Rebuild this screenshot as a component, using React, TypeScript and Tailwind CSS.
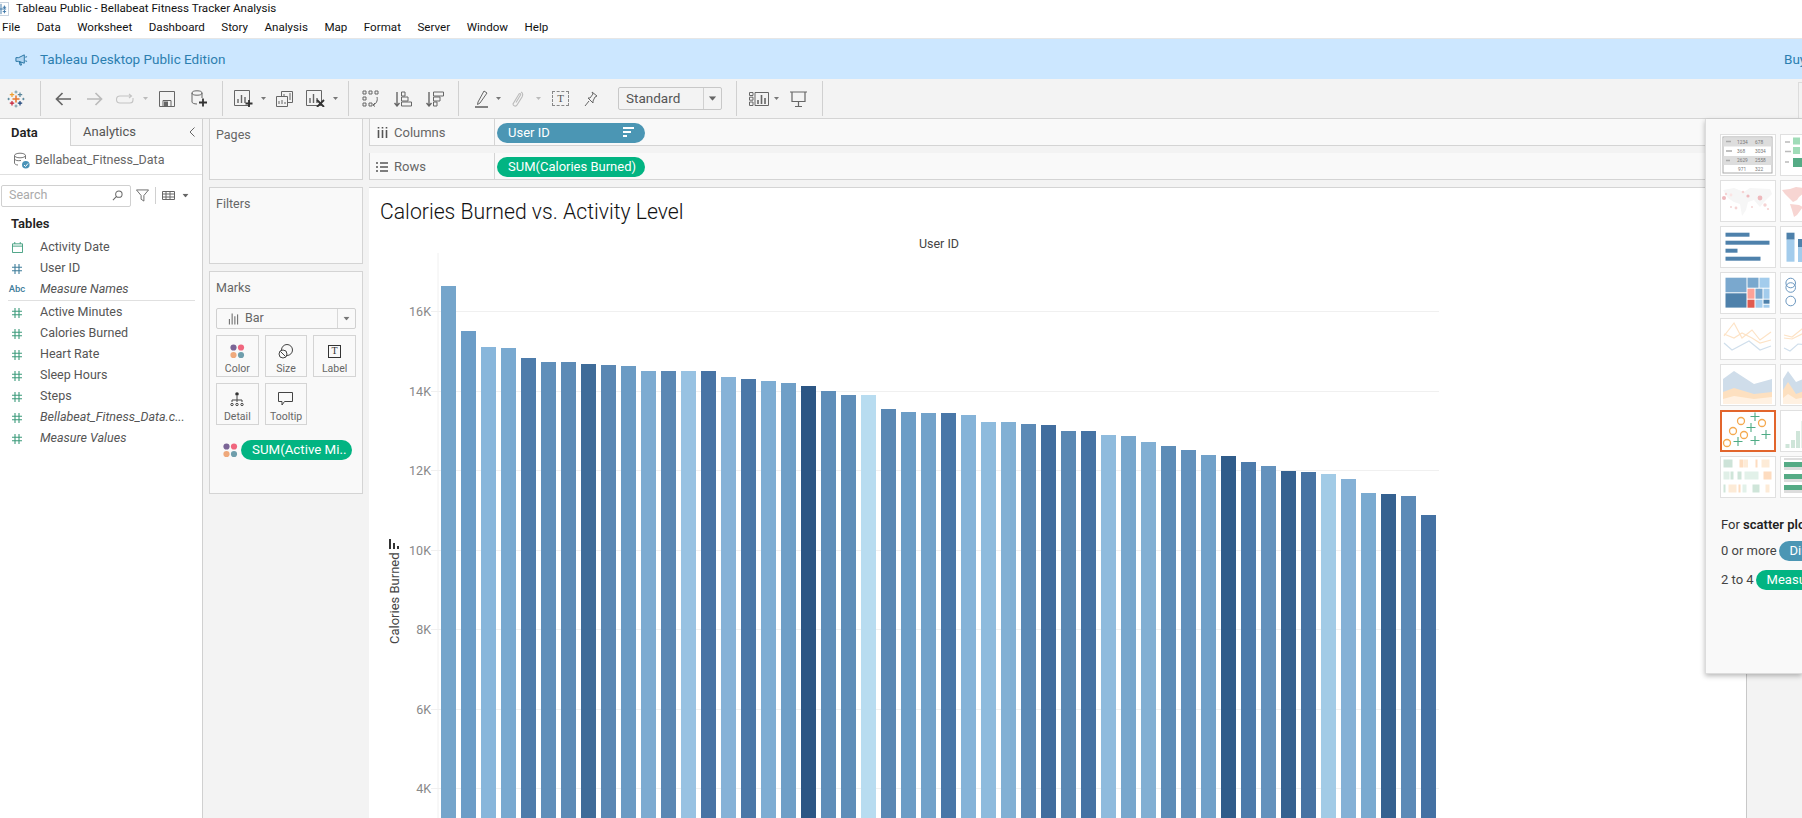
import React from "react";

const bars: [number, string][] = [
  [286, "#75a5cb"], [331, "#6c9dc7"], [347, "#88b6db"], [348, "#79a9d0"], [358, "#4e7cab"], [362, "#608fba"], [362, "#5d8bb6"], [364, "#3f6c99"], [365, "#5a87b3"], [366, "#6b9bc4"],
  [371, "#7dabd1"], [371, "#5b88b4"], [371, "#98c2e2"], [371, "#4874a5"], [377, "#86b2d7"], [379, "#4b78a8"], [381, "#7eadd3"], [383, "#6f9fc7"], [386, "#2c5684"], [391, "#5f8eb9"],
  [395, "#5f8eb9"], [395, "#b8dcf0"], [409, "#5a88b4"], [412, "#6c9dc6"], [413, "#72a2ca"], [413, "#4977a8"], [415, "#85b3d8"], [422, "#8ebbdd"], [422, "#82b0d4"], [424, "#5c8ab6"],
  [425, "#416d9e"], [431, "#5a88b3"], [431, "#4673a4"], [435, "#8fbbdd"], [436, "#78a7cd"], [442, "#82afd3"], [446, "#5d8cb7"], [450, "#6391bc"], [455, "#71a1c9"], [456, "#305c8a"],
  [462, "#4d7bab"], [466, "#6492bd"], [471, "#356190"], [472, "#4773a3"], [474, "#a2cbe6"], [479, "#85b1d6"], [493, "#7aaad0"], [494, "#356190"], [496, "#5c8ab7"], [515, "#4471a3"],
];
const ticks: [string, number][] = [["16K", 311], ["14K", 391], ["12K", 470], ["10K", 550], ["8K", 629], ["6K", 709], ["4K", 788]];

const Dd = ({ c = "#777", className = "" }: { c?: string; className?: string }) => (
  <svg viewBox="0 0 5 3" className={`w-[5px] h-[3px] shrink-0 ${className}`}><path d="M0 0H5L2.5 3Z" fill={c} /></svg>
);

const Hash = ({ c }: { c: string }) => (
  <svg viewBox="0 0 12 12" className="w-[12px] h-[12px]" fill="none" stroke={c} strokeWidth="1.1">
    <path d="M4 1V11M8 1V11M1 4.2H11M1 7.8H11" />
  </svg>
);

const Dots = () => (
  <svg viewBox="0 0 15 15" className="w-[15px] h-[15px] shrink-0">
    <circle cx="3.5" cy="3.5" r="3.1" fill="#7b6596" /><circle cx="11" cy="3.5" r="3.1" fill="#f0667e" />
    <circle cx="3.5" cy="11" r="3.1" fill="#efa97c" /><circle cx="11" cy="11" r="3.1" fill="#6f9eac" />
  </svg>
);

const TableauLogo = ({ className = "" }: { className?: string }) => (
  <svg viewBox="0 0 18 18" className={className} fill="none" strokeWidth="1.2">
    <path d="M9 5.5V12.5M5.5 9H12.5" stroke="#e8762c" strokeWidth="1.5" />
    <path d="M5 2.5V7M2.8 4.7H7.2" stroke="#f0a030" />
    <path d="M13 2.5V7M10.8 4.7H15.2" stroke="#5b879b" />
    <path d="M5 11V15.5M2.8 13.2H7.2" stroke="#c72037" />
    <path d="M13 11V15.5M10.8 13.2H15.2" stroke="#1f447a" />
    <path d="M9 .5V3.5M7.5 2H10.5M9 14.5V17.5M7.5 16H10.5" stroke="#7099a6" strokeWidth="1" />
    <path d="M.5 9H2.8M1.6 7.8V10.2M15.2 9H17.5M16.4 7.8V10.2" stroke="#59879b" strokeWidth="1" />
  </svg>
);

const Field = ({ icon, label, italic }: { icon: React.ReactNode; label: string; italic?: boolean }) => (
  <div className="h-[21px] flex items-center">
    <div className="w-[40px] flex justify-center pl-[4px] pr-[10px] shrink-0">{icon}</div>
    <span className={`text-[12.5px] text-[#555] whitespace-nowrap ${italic ? "italic" : ""}`}>{label}</span>
  </div>
);

const MarkBtn = ({ icon, label }: { icon: React.ReactNode; label: string }) => (
  <div className="h-[42px] border border-[#d4d4d4] flex flex-col items-center pt-[6px] bg-[#f9f9f9]">
    <div className="h-[18px] flex items-center justify-center">{icon}</div>
    <span className="text-[10.5px] text-[#666] leading-[14px] mt-[2px]">{label}</span>
  </div>
);

const Thumb = ({ children, selected }: { children?: React.ReactNode; selected?: boolean }) => (
  <div className={`w-[56px] h-[42px] bg-white shrink-0 box-border ${selected ? "border-2 border-[#e2652c]" : "border border-[#e0e0e0]"}`}>
    {selected ? (
      <svg viewBox="2 2 52 38" className="block w-[52px] h-[38px]" fill="none">{children}</svg>
    ) : (
      <svg viewBox="1 1 54 40" className="block w-[54px] h-[40px]" fill="none">{children}</svg>
    )}
  </div>
);

const thumbs = (font: string) => [
  <Thumb key="t1">
    <rect x="3" y="3" width="49" height="36" stroke="#aaa" fill="#fff" />
    <rect x="3.5" y="3.5" width="48" height="9" fill="#ddd" /><rect x="3.5" y="22" width="48" height="9" fill="#ddd" />
    <path d="M6 7.5H11M6 17H12M6 26.5H10" stroke="#aaa" strokeWidth="1.6" />
    <g fontSize="4.8" fill="#777" className={font}>
      <text x="17" y="10">1234</text><text x="35" y="10">678</text>
      <text x="17" y="19">368</text><text x="35" y="19">3034</text>
      <text x="17" y="28">2629</text><text x="35" y="28">2558</text>
      <text x="18" y="37">971</text><text x="35" y="37">322</text>
    </g>
  </Thumb>,
  <Thumb key="t2">
    <path d="M5 8H10M5 17.5H11M5 28H9" stroke="#bbb" strokeWidth="1.6" />
    <rect x="13" y="3.5" width="7" height="7" fill="#a0dcb8" /><rect x="13" y="13" width="7" height="7" fill="#a0dcb8" /><rect x="13" y="24" width="9" height="9" fill="#55ab85" />
    <rect x="25" y="3.5" width="9" height="9" fill="#55ab85" /><rect x="25" y="14" width="6" height="6" fill="#a0dcb8" />
  </Thumb>,
  <Thumb key="t3">
    <path d="M3 10L14 8L24 12L30 8L50 9L52 14L44 22L40 27L34 20L28 22L26 30L22 36L20 24L14 22L8 18Z" fill="#f6f6f6" />
    <g fill="#f5d3d3"><circle cx="4" cy="18" r="2" fill="#eeb9bd" /><circle cx="6" cy="14" r="1.2" /><circle cx="11" cy="27" r="1" /><circle cx="16" cy="28" r="1.4" /><circle cx="11" cy="15" r="1.4" fill="#fbe4e4" /><circle cx="23" cy="12" r="1.3" /><circle cx="28" cy="16" r="1.6" fill="#eeb9bd" /><circle cx="40" cy="18" r="2.4" fill="#eeb9bd" /><circle cx="45" cy="25" r="1.7" /><circle cx="48" cy="29" r="1.1" /><circle cx="32" cy="27" r="1" /></g>
  </Thumb>,
  <Thumb key="t4">
    <path d="M2 10L10 9L16 7L24 8L24 13L19 17L17 20L13 22L9 18L5 14Z" fill="#f7d5d2" />
    <path d="M10 24L19 25L23 27L17 35L14 37L12 30Z" fill="#f7d5d2" />
  </Thumb>,
  <Thumb key="t5">
    <g fill="#4e81ab"><rect x="5.5" y="6.7" width="24" height="4" /><rect x="5.5" y="14.7" width="44" height="4" /><rect x="5.5" y="22.7" width="12" height="4" /><rect x="5.5" y="30.7" width="35" height="4" /></g>
  </Thumb>,
  <Thumb key="t6">
    <rect x="6.5" y="6.7" width="8" height="7" fill="#4e81ab" /><rect x="6.5" y="13.7" width="8" height="22" fill="#a3ccec" />
    <rect x="18" y="13" width="8" height="8" fill="#4e81ab" /><rect x="18" y="21" width="8" height="15" fill="#a3ccec" />
  </Thumb>,
  <Thumb key="t7">
    <rect x="5.5" y="5.7" width="21" height="14.6" fill="#7aa8ce" /><rect x="5.5" y="21.3" width="21" height="14.3" fill="#4e81ab" />
    <rect x="27.5" y="5.7" width="11" height="10" fill="#7aa8ce" /><rect x="39.5" y="5.7" width="10" height="10" fill="#a3ccec" />
    <rect x="27.5" y="16.7" width="7" height="10" fill="#fca298" /><rect x="27.5" y="27.7" width="7" height="8" fill="#e05b50" />
    <rect x="35.5" y="16.7" width="7" height="10" fill="#7aa8ce" /><rect x="43.5" y="16.7" width="6" height="10" fill="#a3ccec" />
    <rect x="35.5" y="27.7" width="7" height="8" fill="#a3ccec" /><rect x="43.5" y="27.7" width="6" height="4" fill="#4e81ab" /><rect x="43.5" y="32.7" width="6" height="3" fill="#a3ccec" />
  </Thumb>,
  <Thumb key="t8">
    <g stroke="#6b97bf" strokeWidth="1"><circle cx="10.7" cy="11" r="4.8" /><circle cx="10.7" cy="15.5" r="4.8" /><circle cx="10.7" cy="29" r="4.8" /></g>
  </Thumb>,
  <Thumb key="t9">
    <g strokeWidth="1.2">
      <path d="M4 18L14 5L22 20L32 12L40 22L51 14" stroke="#fde3c6" />
      <path d="M4 16L14 20L22 15L32 20L40 25L51 22" stroke="#fde3c6" />
      <path d="M4 25L12 32L29 23L40 32L51 28" stroke="#d0dfec" />
    </g>
  </Thumb>,
  <Thumb key="t10">
    <g strokeWidth="1.2">
      <path d="M4 17L12 19L22 11L30 19" stroke="#fde3c6" />
      <path d="M4 20L12 21L22 16L30 24" stroke="#fde3c6" />
      <path d="M4 30L10 33L18 26L30 27" stroke="#d0dfec" />
    </g>
  </Thumb>,
  <Thumb key="t11">
    <path d="M3 15L14 7L34 20L52 15V40H3Z" fill="#cfddea" />
    <path d="M3 28L14 24L34 30L52 28V40H3Z" fill="#fde0c0" />
    <path d="M3 35L14 32L34 35L52 33V40H3Z" fill="#fff1e2" />
  </Thumb>,
  <Thumb key="t12">
    <path d="M3 15L8 7L16 18L30 12V40H3Z" fill="#cfddea" />
    <path d="M3 26L8 18L16 30L30 25V40H3Z" fill="#fde0c0" />
    <path d="M3 34L8 30L16 35L30 32V40H3Z" fill="#fff1e2" />
  </Thumb>,
  <Thumb key="t13" selected>
    <g stroke="#f4a94f" strokeWidth="1.3">
      <circle cx="21" cy="11" r="3.5" /><circle cx="42" cy="13" r="3.5" /><circle cx="13" cy="21" r="3.5" /><circle cx="24" cy="25" r="3.5" /><circle cx="7" cy="33" r="3.5" />
    </g>
    <g stroke="#4eab85" strokeWidth="1.1">
      <path d="M35 2.5V11M30.5 6.5H39.5M31 13V22M26.5 17.5H35.5M46 20V29M41.5 24.5H50.5M18 27V36M13.5 31.5H22.5M35 26V35M30.5 30.5H39.5" />
    </g>
  </Thumb>,
  <Thumb key="t14">
    <g fill="#cfe5d9"><rect x="5.5" y="34" width="4" height="4" /><rect x="11" y="30" width="4" height="8" /><rect x="16" y="21" width="4" height="17" /><rect x="21.5" y="11" width="4" height="27" /></g>
  </Thumb>,
  <Thumb key="t15">
    <rect x="3.5" y="3.5" width="9" height="8" fill="#cde3d8" /><rect x="19.5" y="3.5" width="4" height="8" fill="#fdddc0" /><rect x="24" y="3.5" width="4" height="8" fill="#fdebd7" /><rect x="35.5" y="3.5" width="2" height="8" fill="#fddcc0" /><rect x="41.5" y="3.5" width="8" height="8" fill="#fdebd7" />
    <rect x="3.5" y="15.5" width="6" height="8" fill="#e0efe7" /><rect x="10.5" y="15.5" width="3" height="8" fill="#cfe5d9" /><rect x="17.5" y="15.5" width="4" height="8" fill="#cfe5d9" /><rect x="24.5" y="15.5" width="14" height="8" fill="#e2f1e9" /><rect x="43.5" y="15.5" width="8" height="8" fill="#fddcc0" />
    <rect x="3.5" y="28.5" width="2" height="8" fill="#cfe5d9" /><rect x="8.5" y="28.5" width="8" height="8" fill="#fdebd7" /><rect x="18.5" y="28.5" width="2" height="8" fill="#fddcc0" /><rect x="22.5" y="28.5" width="4" height="8" fill="#e2f1e9" /><rect x="32.5" y="28.5" width="7" height="8" fill="#cfe5d9" /><rect x="45.5" y="28.5" width="4" height="8" fill="#fdebd7" />
  </Thumb>,
  <Thumb key="t16">
    <rect x="4" y="2" width="50" height="2" fill="#ddd" /><rect x="4" y="6" width="50" height="5" fill="#55ab85" /><rect x="4" y="11" width="50" height="3" fill="#ddd" />
    <rect x="4" y="18" width="50" height="5" fill="#55ab85" /><rect x="4" y="23" width="50" height="3" fill="#ddd" />
    <rect x="4" y="29" width="50" height="5" fill="#55ab85" /><rect x="4" y="34" width="50" height="3" fill="#ddd" />
  </Thumb>,
];

const Seg = ({ w, children }: { w: string; children?: React.ReactNode }) => (
  <div className={`${w} h-[35px] flex items-center shrink-0 border-r border-[#d0d0d0]`}>{children}</div>
);

const ShelfRow = ({ icon, label, pill, bg }: { icon: React.ReactNode; label: string; pill: React.ReactNode; bg: string }) => (
  <div className="h-[27px] bg-[#f9f9f9] border-b border-[#d4d4d4] border-l flex items-center">
    <div className="w-[125px] h-full border-r border-[#d4d4d4] flex items-center shrink-0 pt-[1px]">
      <div className="w-[24px] flex justify-center">{icon}</div>
      <span className="text-[13px] text-[#666]">{label}</span>
    </div>
    <div className={`ml-[2px] mt-[1px] w-[148px] h-[20px] rounded-full ${bg} text-white text-[13px] flex items-center px-[11px] whitespace-nowrap justify-between`}>{pill}</div>
  </div>
);

export default function App() {
  const sans = "font-['Roboto',sans-serif]";
  return (
    <div className={`w-[1802px] h-[818px] overflow-hidden bg-white flex flex-col relative ${sans}`}>
      {/* title bar */}
      <div className="h-[17px] flex items-center shrink-0 text-[11.6px] text-[#111] overflow-hidden">
        <div className="w-[16px] h-[14px] shrink-0 -ml-[7px] mr-[7px] border border-[#c9d3df] flex items-center justify-center">
          <svg viewBox="0 0 14 14" className="w-[12px] h-[12px]" fill="none" stroke="#3f78a8" strokeWidth="1.1"><path d="M7 1V13M1 7H13M3 3V7M1 5H5M11 3V7M9 5H13M3 8V12M1 10H5M11 8V12M9 10H13" /></svg>
        </div>
        <span>Tableau Public - Bellabeat Fitness Tracker Analysis</span>
      </div>
      {/* menu */}
      <div className="h-[22px] flex items-center shrink-0 pl-[2px] pt-[1px] gap-[16.5px] text-[11.6px] text-[#111] border-b border-[#e6e6e6]">
        {["File", "Data", "Worksheet", "Dashboard", "Story", "Analysis", "Map", "Format", "Server", "Window", "Help"].map((m) => (
          <span key={m}>{m}</span>
        ))}
      </div>
      {/* banner */}
      <div className="h-[40px] bg-[#cce7ff] flex items-center shrink-0 pl-[15px] text-[13.5px] text-[#2c7fb0]">
        <svg viewBox="0 0 14 14" className="w-[13px] h-[13px]" fill="#1f6f9f"><path d="M1 5H4L10 2V11L4 9H1ZM4.5 9.5L5.5 13H7L6 9.8ZM11 4.5L13 4M11 8.5L13 9" stroke="#1f6f9f" strokeWidth="1" fillOpacity="0.15" /></svg>
        <span className="ml-[12px]">Tableau Desktop Public Edition</span>
        <span className="ml-auto w-[18px] overflow-hidden whitespace-nowrap">Buy</span>
      </div>
      {/* toolbar */}
      <div className="h-[40px] bg-[#f3f3f3] flex items-center shrink-0 border-b border-[#d4d4d4]">
        <Seg w="w-[41px]"><TableauLogo className="w-[18px] h-[18px] ml-[7px]" /></Seg>
        <Seg w="w-[182px]">
          <svg viewBox="0 0 16 14" className="ml-[14px] w-[16px] h-[14px]" fill="none" stroke="#666" strokeWidth="1.7"><path d="M16 7H1.5M7.5 1L1.5 7L7.5 13" /></svg>
          <svg viewBox="0 0 16 14" className="ml-[16px] w-[16px] h-[14px]" fill="none" stroke="#bbb" strokeWidth="1.7"><path d="M0 7H14.5M8.5 1L14.5 7L8.5 13" /></svg>
          <svg viewBox="0 0 18 12" className="ml-[13px] w-[18px] h-[12px]" fill="none" stroke="#c4c4c4" strokeWidth="1.1"><path d="M15 3H4A3 3 0 0 0 4 10H14A3 3 0 0 0 17 7V5M13 1L15.5 3L13 5" /></svg>
          <Dd c="#bbb" className="ml-[9px]" />
          <svg viewBox="0 0 16 16" className="ml-[11px] w-[16px] h-[16px]" fill="none" stroke="#666" strokeWidth="1"><path d="M.5.5H15.5V15.5H.5ZM4 15.5V9.5H12V15.5" /><rect x="5.5" y="11" width="3" height="4" fill="#666" /></svg>
          <svg viewBox="0 0 16 17" className="ml-[16px] w-[16px] h-[17px]" fill="none" stroke="#666" strokeWidth="1"><ellipse cx="6" cy="3" rx="5" ry="2.2" /><path d="M1 3V12C1 13 3 14 6 14M11 3V8" /><path d="M12 8.5V16.5M8 12.5H16" stroke="#333" strokeWidth="1.8" /></svg>
        </Seg>
        <Seg w="w-[126px]">
          <svg viewBox="0 0 19 17" className="ml-[11px] w-[19px] h-[17px]" fill="none" stroke="#666" strokeWidth="1"><path d="M.5.5H15.5V15.5H.5Z" /><path d="M4 13V9M7.5 13V5M11 13V7" strokeWidth="1.4" /><path d="M15 10V17M11.5 13.5H18.5" stroke="#333" strokeWidth="1.8" /></svg>
          <Dd className="ml-[8px]" />
          <svg viewBox="0 0 17 16" className="ml-[10px] w-[17px] h-[16px]" fill="none" stroke="#666" strokeWidth="1"><path d="M5.5 5V.5H16.5V11.5H11.5" /><path d="M.5 5.5H11.5V15.5H.5Z" fill="#f3f3f3" /><path d="M8 5V3M14 9V2" /><path d="M3 13V10M6 13V9M9 13V11" /></svg>
          <svg viewBox="0 0 19 17" className="ml-[13px] w-[19px] h-[17px]" fill="none" stroke="#666" strokeWidth="1"><path d="M.5.5H15.5V15.5H.5Z" /><path d="M4 13V8M7.5 13V4M11 13V8" strokeWidth="1.4" /><path d="M11 10L18 17M18 10L11 17" stroke="#333" strokeWidth="1.8" /></svg>
          <Dd className="ml-[8px]" />
        </Seg>
        <Seg w="w-[110px]">
          <svg viewBox="0 0 17 17" className="ml-[13px] w-[17px] h-[17px]" fill="none" stroke="#666" strokeWidth="1"><path d="M1 1H4V4H1ZM7 1H10V4H7ZM13 1H16V4H13ZM1 7H4V10H1ZM1 13H4V16H1ZM7 13H10V16H7Z" /><path d="M15 7C16 11 14 14 11 15M13 13L11 15L13 16.5" /></svg>
          <svg viewBox="0 0 18 16" className="ml-[15px] w-[18px] h-[16px]" fill="none" stroke="#666" strokeWidth="1"><path d="M3 1V15M.5 12L3 15L5.5 12" strokeWidth="1.4" /><path d="M7.5 1H11V5H7.5ZM7.5 6H14V10H7.5ZM7.5 11H17.5V15H7.5Z" /></svg>
          <svg viewBox="0 0 18 16" className="ml-[14px] w-[18px] h-[16px]" fill="none" stroke="#666" strokeWidth="1"><path d="M3 1V15M.5 12L3 15L5.5 12" strokeWidth="1.4" /><path d="M7.5 1H17.5V5H7.5ZM7.5 6H14V10H7.5ZM7.5 11H11V15H7.5Z" /></svg>
        </Seg>
        <Seg w="w-[278px]">
          <svg viewBox="0 0 13 18" className="ml-[16px] w-[13px] h-[18px]" fill="none" stroke="#666" strokeWidth="1"><path d="M3 12L9 1L12 3L5 13L2.5 14.5Z" /><path d="M0 17H13" strokeWidth="1.6" /></svg>
          <Dd className="ml-[8px]" />
          <svg viewBox="0 0 12 16" className="ml-[11px] w-[12px] h-[16px]" fill="none" stroke="#bbb" strokeWidth="1.1"><path d="M9 1C11 2 11 4 10 6L5 14C4 16 1 15 1 13L7 3C8 2 9 3 8.5 4L4 11.5" /></svg>
          <Dd c="#bbb" className="ml-[12px]" />
          <div className="ml-[11px] w-[17px] h-[15px] border border-dashed border-[#888] flex items-center justify-center text-[11px] leading-none text-[#555] font-['Liberation_Serif',serif]">T</div>
          <svg viewBox="0 0 14 16" className="ml-[15px] w-[14px] h-[16px]" fill="none" stroke="#666" strokeWidth="1"><path d="M8 1L13 5L11 6L9 10L9 12L4 7L6 7L9 3ZM5 10L1 15" /></svg>
          <div className="ml-[20px] w-[104px] h-[23px] border border-[#c8c8c8] rounded-[2px] flex items-center bg-[#f3f3f3]">
            <span className="flex-1 pl-[7px] text-[13.5px] text-[#555]">Standard</span>
            <div className="w-[18px] h-full border-l border-[#d0d0d0] flex items-center justify-center"><Dd c="#666" className="scale-150" /></div>
          </div>
        </Seg>
        <Seg w="w-[86px]">
          <svg viewBox="0 0 20 14" className="ml-[12px] w-[20px] h-[14px]" fill="none" stroke="#666" strokeWidth="1"><path d="M.5.5H4V3.5H.5ZM.5 5.2H4V8.2H.5ZM.5 10H4V13.5H.5ZM6 .5H19.5V13.5H6Z" /><path d="M9 12V8M12.5 12V3M16 12V6" strokeWidth="1.6" /></svg>
          <Dd className="ml-[5px]" />
          <svg viewBox="0 0 17 16" className="ml-[11px] w-[17px] h-[16px]" fill="none" stroke="#666" strokeWidth="1.2"><path d="M0 1H17M2 1.5V10.5H15V1.5M8.5 11V15M5 15.5H12" /></svg>
        </Seg>
        <div className="ml-auto self-end h-[36px] w-[4px] border-l border-t border-[#dcdcdc]" />
      </div>
      {/* body */}
      <div className="flex-1 flex min-h-0">
        {/* data pane */}
        <div className="w-[203px] shrink-0 border-r border-[#d0d0d0] bg-white flex flex-col">
          <div className="h-[27px] flex">
            <div className="w-[71px] border-r border-[#d4d4d4] pl-[11px] flex items-center text-[13px] font-semibold text-[#222]">Data</div>
            <div className="flex-1 bg-[#f7f7f7] border-b border-[#d4d4d4] pl-[12px] pr-[7px] flex items-center justify-between text-[13px] text-[#555]">
              <span>Analytics</span>
              <svg viewBox="0 0 6 10" className="w-[6px] h-[10px]" fill="none" stroke="#666"><path d="M5.5 .5L1 5L5.5 9.5" /></svg>
            </div>
          </div>
          <div className="h-[29px] border-b border-[#e0e0e0] flex items-center pl-[13px]">
            <svg viewBox="0 0 17 17" className="w-[17px] h-[17px]" fill="none" stroke="#777"><ellipse cx="7" cy="3.5" rx="5.5" ry="2.3" /><path d="M1.5 3.5V11C1.5 12 3 13 5 13M12.5 3.5V7M1.5 7C2 8.5 5 9 8 8.5" /><circle cx="12.8" cy="12.8" r="3.8" fill="#4a93b8" stroke="none" /><path d="M11 13L12.5 14.5L15 11.5" stroke="#fff" /></svg>
            <span className="ml-[5px] text-[12.5px] text-[#666]">Bellabeat_Fitness_Data</span>
          </div>
          <div className="flex items-center pl-[1px] mt-[9px] h-[23px]">
            <div className="w-[130px] h-[22px] border border-[#d0d0d0] rounded-[2px] flex items-center justify-between px-[7px] text-[12.5px] text-[#aaa]">
              <span>Search</span>
              <svg viewBox="0 0 12 12" className="w-[11px] h-[11px]" fill="none" stroke="#666" strokeWidth="1.1"><circle cx="7.5" cy="4.5" r="3.5" /><path d="M5 7L1 11" /></svg>
            </div>
            <svg viewBox="0 0 14 14" className="ml-[5px] w-[13px] h-[13px]" fill="none" stroke="#666"><path d="M.5 1H13.5L8.5 7V13L5.5 11V7Z" /></svg>
            <div className="ml-[6px] w-px h-[17px] bg-[#d0d0d0]" />
            <svg viewBox="0 0 13 9" className="ml-[6px] w-[13px] h-[9px]" fill="none" stroke="#666"><path d="M.5.5H12.5V8.5H.5ZM.5 3H12.5M.5 6H12.5M4 .5V8.5M8 .5V8.5" /></svg>
            <Dd c="#666" className="ml-[8px] scale-125" />
          </div>
          <div className="pl-[11px] mt-[7px] text-[13px] font-semibold text-[#222] leading-[20px]">Tables</div>
          <div className="mt-[3px] pr-[6px]">
            <Field icon={<svg viewBox="0 0 12 12" className="w-[11px] h-[11px]" fill="none" stroke="#3c9b7b"><path d="M.5 2H11.5V11.5H.5ZM.5 4.5H11.5M3 0V2M9 0V2" /></svg>} label="Activity Date" />
            <Field icon={<Hash c="#3f7d9b" />} label="User ID" />
            <Field icon={<span className="text-[9.5px] font-medium text-[#3f7d9b]">Abc</span>} label="Measure Names" italic />
            <div className="h-px bg-[#e0e0e0] ml-[8px] mr-[1px]" />
            <div className="h-[1px]" />
            {["Active Minutes", "Calories Burned", "Heart Rate", "Sleep Hours", "Steps"].map((l) => (
              <Field key={l} icon={<Hash c="#3c9b7b" />} label={l} />
            ))}
            <Field icon={<Hash c="#3c9b7b" />} label="Bellabeat_Fitness_Data.c..." italic />
            <Field icon={<Hash c="#3c9b7b" />} label="Measure Values" italic />
          </div>
        </div>
        {/* cards */}
        <div className="w-[166px] shrink-0 bg-[#f3f3f3] px-[6px] flex flex-col gap-[7px]">
          <div className="h-[61px] bg-[#f9f9f9] border border-[#d4d4d4] border-t-0 pl-[6px] pt-[7px] text-[12.5px] text-[#666]">Pages</div>
          <div className="h-[77px] bg-[#f9f9f9] border border-[#d4d4d4] pl-[6px] pt-[7px] text-[12.5px] text-[#666]">Filters</div>
          <div className="h-[223px] bg-[#f9f9f9] border border-[#d4d4d4] px-[6px] pt-[8px]">
            <div className="text-[12.5px] text-[#666] leading-[15px]">Marks</div>
            <div className="mt-[13px] h-[21px] border border-[#d0d0d0] rounded-[2px] bg-[#f9f9f9] flex items-center">
              <svg viewBox="0 0 12 12" className="ml-[11px] w-[11px] h-[12px]" fill="none" stroke="#555"><path d="M1.5 12V6M4.5 12V0M7.5 12V3M10.5 12V1" /></svg>
              <span className="ml-[6px] flex-1 text-[12.5px] text-[#666]">Bar</span>
              <div className="w-[18px] h-full border-l border-[#d8d8d8] flex items-center justify-center"><Dd c="#777" className="scale-125" /></div>
            </div>
            <div className="mt-[6px] grid grid-cols-3 gap-x-[6px] gap-y-[6px]">
              <MarkBtn label="Color" icon={<Dots />} />
              <MarkBtn label="Size" icon={<svg viewBox="0 0 15 15" className="w-[15px] h-[15px]" fill="none" stroke="#444"><circle cx="9" cy="6" r="5.5" /><circle cx="5" cy="10" r="4" fill="#f9f9f9" /><path d="M2.5 7.5L7.5 12.5" /></svg>} />
              <MarkBtn label="Label" icon={<div className="w-[13px] h-[13px] border border-[#333] flex items-center justify-center text-[10px] leading-none text-[#333] font-['Liberation_Serif',serif]">T</div>} />
              <MarkBtn label="Detail" icon={<svg viewBox="0 0 14 15" className="w-[14px] h-[15px]" fill="none" stroke="#444"><circle cx="7" cy="2" r="1.8" fill="#333" stroke="none" /><path d="M7 4V10M2 10V8H12V10" /><circle cx="2" cy="12.5" r="1.2" /><circle cx="7" cy="12.5" r="1.2" /><circle cx="12" cy="12.5" r="1.2" /></svg>} />
              <MarkBtn label="Tooltip" icon={<svg viewBox="0 0 15 14" className="w-[15px] h-[14px]" fill="none" stroke="#444"><path d="M.5.5H14.5V9.5H6.5L4 13V9.5H.5Z" /></svg>} />
            </div>
            <div className="mt-[15px] flex items-center pl-[7px]">
              <Dots />
              <div className="ml-[3px] w-[111px] h-[20px] rounded-full bg-[#02b482] text-white text-[13.3px] flex items-center pl-[11px] whitespace-nowrap">SUM(Active Mi..</div>
            </div>
          </div>
        </div>
        {/* main */}
        <div className="w-[1378px] shrink-0 flex flex-col border-r border-[#c8c8c8] bg-[#f3f3f3] min-h-0">
          <ShelfRow bg="bg-[#4b96b4]" label="Columns"
            icon={<svg viewBox="0 0 11 11" className="w-[11px] h-[11px]" stroke="#555" strokeWidth="1.6"><path d="M1.5 3V11M5.5 3V11M9.5 3V11M1.5 0V1.5M5.5 0V1.5M9.5 0V1.5" /></svg>}
            pill={<><span>User ID</span><svg viewBox="0 0 11 11" className="w-[11px] h-[11px]" fill="#fff"><path d="M0 0H11V2H0ZM0 4H8V6H0ZM0 8H4V10H0Z" /></svg></>} />
          <div className="h-[7px]" />
          <ShelfRow bg="bg-[#02b482]" label="Rows"
            icon={<svg viewBox="0 0 12 10" className="w-[12px] h-[10px]" stroke="#555" strokeWidth="1.4"><path d="M0 1H2M4 1H12M0 5H2M4 5H12M0 9H2M4 9H12" /></svg>}
            pill={<span>SUM(Calories Burned)</span>} />
          <div className="h-[7px]" />
          <div className="flex-1 bg-white border-t border-[#d4d4d4] min-h-0 overflow-hidden">
            <div className="h-[44px] pl-[11px] pt-[11px] text-[21.2px] leading-[26px] text-[#111] font-light whitespace-nowrap">Calories Burned vs. Activity Level</div>
            <svg viewBox="369 232 1100 586" className="block w-[1100px] h-[586px]">
              <path d="M438 253V818" stroke="#f0f0f0" />
              {ticks.map(([l, y]) => (
                <g key={l}>
                  <path d={`M431 ${y + 0.5}H1439`} stroke="#f0f0f0" />
                  <text x="431" y={y + 4.5} textAnchor="end" fontSize="12.5" fill="#888" className={sans}>{l}</text>
                </g>
              ))}
              {bars.map(([top, c], i) => (
                <rect key={i} x={441 + i * 20} y={top} width="15" height={818 - top} fill={c} />
              ))}
              <text x="939" y="248" textAnchor="middle" fontSize="12.5" fill="#444" className={sans}>User ID</text>
              <text transform="translate(399 644) rotate(-90)" fontSize="13" fill="#444" className={sans}>Calories Burned</text>
              <path d="M389 539H391V549H389ZM393 543H395V549H393ZM397 546H399V549H397Z" fill="#333" />
            </svg>
          </div>
        </div>
        <div className="flex-1 bg-[#f3f3f3]" />
      </div>
      {/* Show Me popup */}
      <div className="absolute left-[1705px] top-[119px] w-[97px] h-[555px] bg-[#f9f9f9] border-l border-b border-[#dcdcdc] shadow-[0_2px_5px_rgba(0,0,0,0.28)] overflow-hidden pl-[14px] pt-[15px]">
        <div className="grid grid-cols-[56px_56px] gap-[4px] w-[116px]">{thumbs(sans)}</div>
        <div className="mt-[17px] pl-[1px] whitespace-nowrap text-[13px] text-[#333] leading-[20px]">For <b className="font-semibold text-[#222]">scatter plots</b> try</div>
        <div className="mt-[6px] pl-[1px] flex items-center whitespace-nowrap text-[13px] text-[#444] h-[20px]">0 or more
          <span className="ml-[2px] h-[20px] px-[11px] rounded-full bg-[#4b96b4] text-white flex items-center">Dimensions</span>
        </div>
        <div className="mt-[9px] pl-[1px] flex items-center whitespace-nowrap text-[13px] text-[#444] h-[20px]">2 to 4
          <span className="ml-[2px] h-[20px] px-[11px] rounded-full bg-[#02b482] text-white flex items-center">Measures</span>
        </div>
      </div>
    </div>
  );
}
